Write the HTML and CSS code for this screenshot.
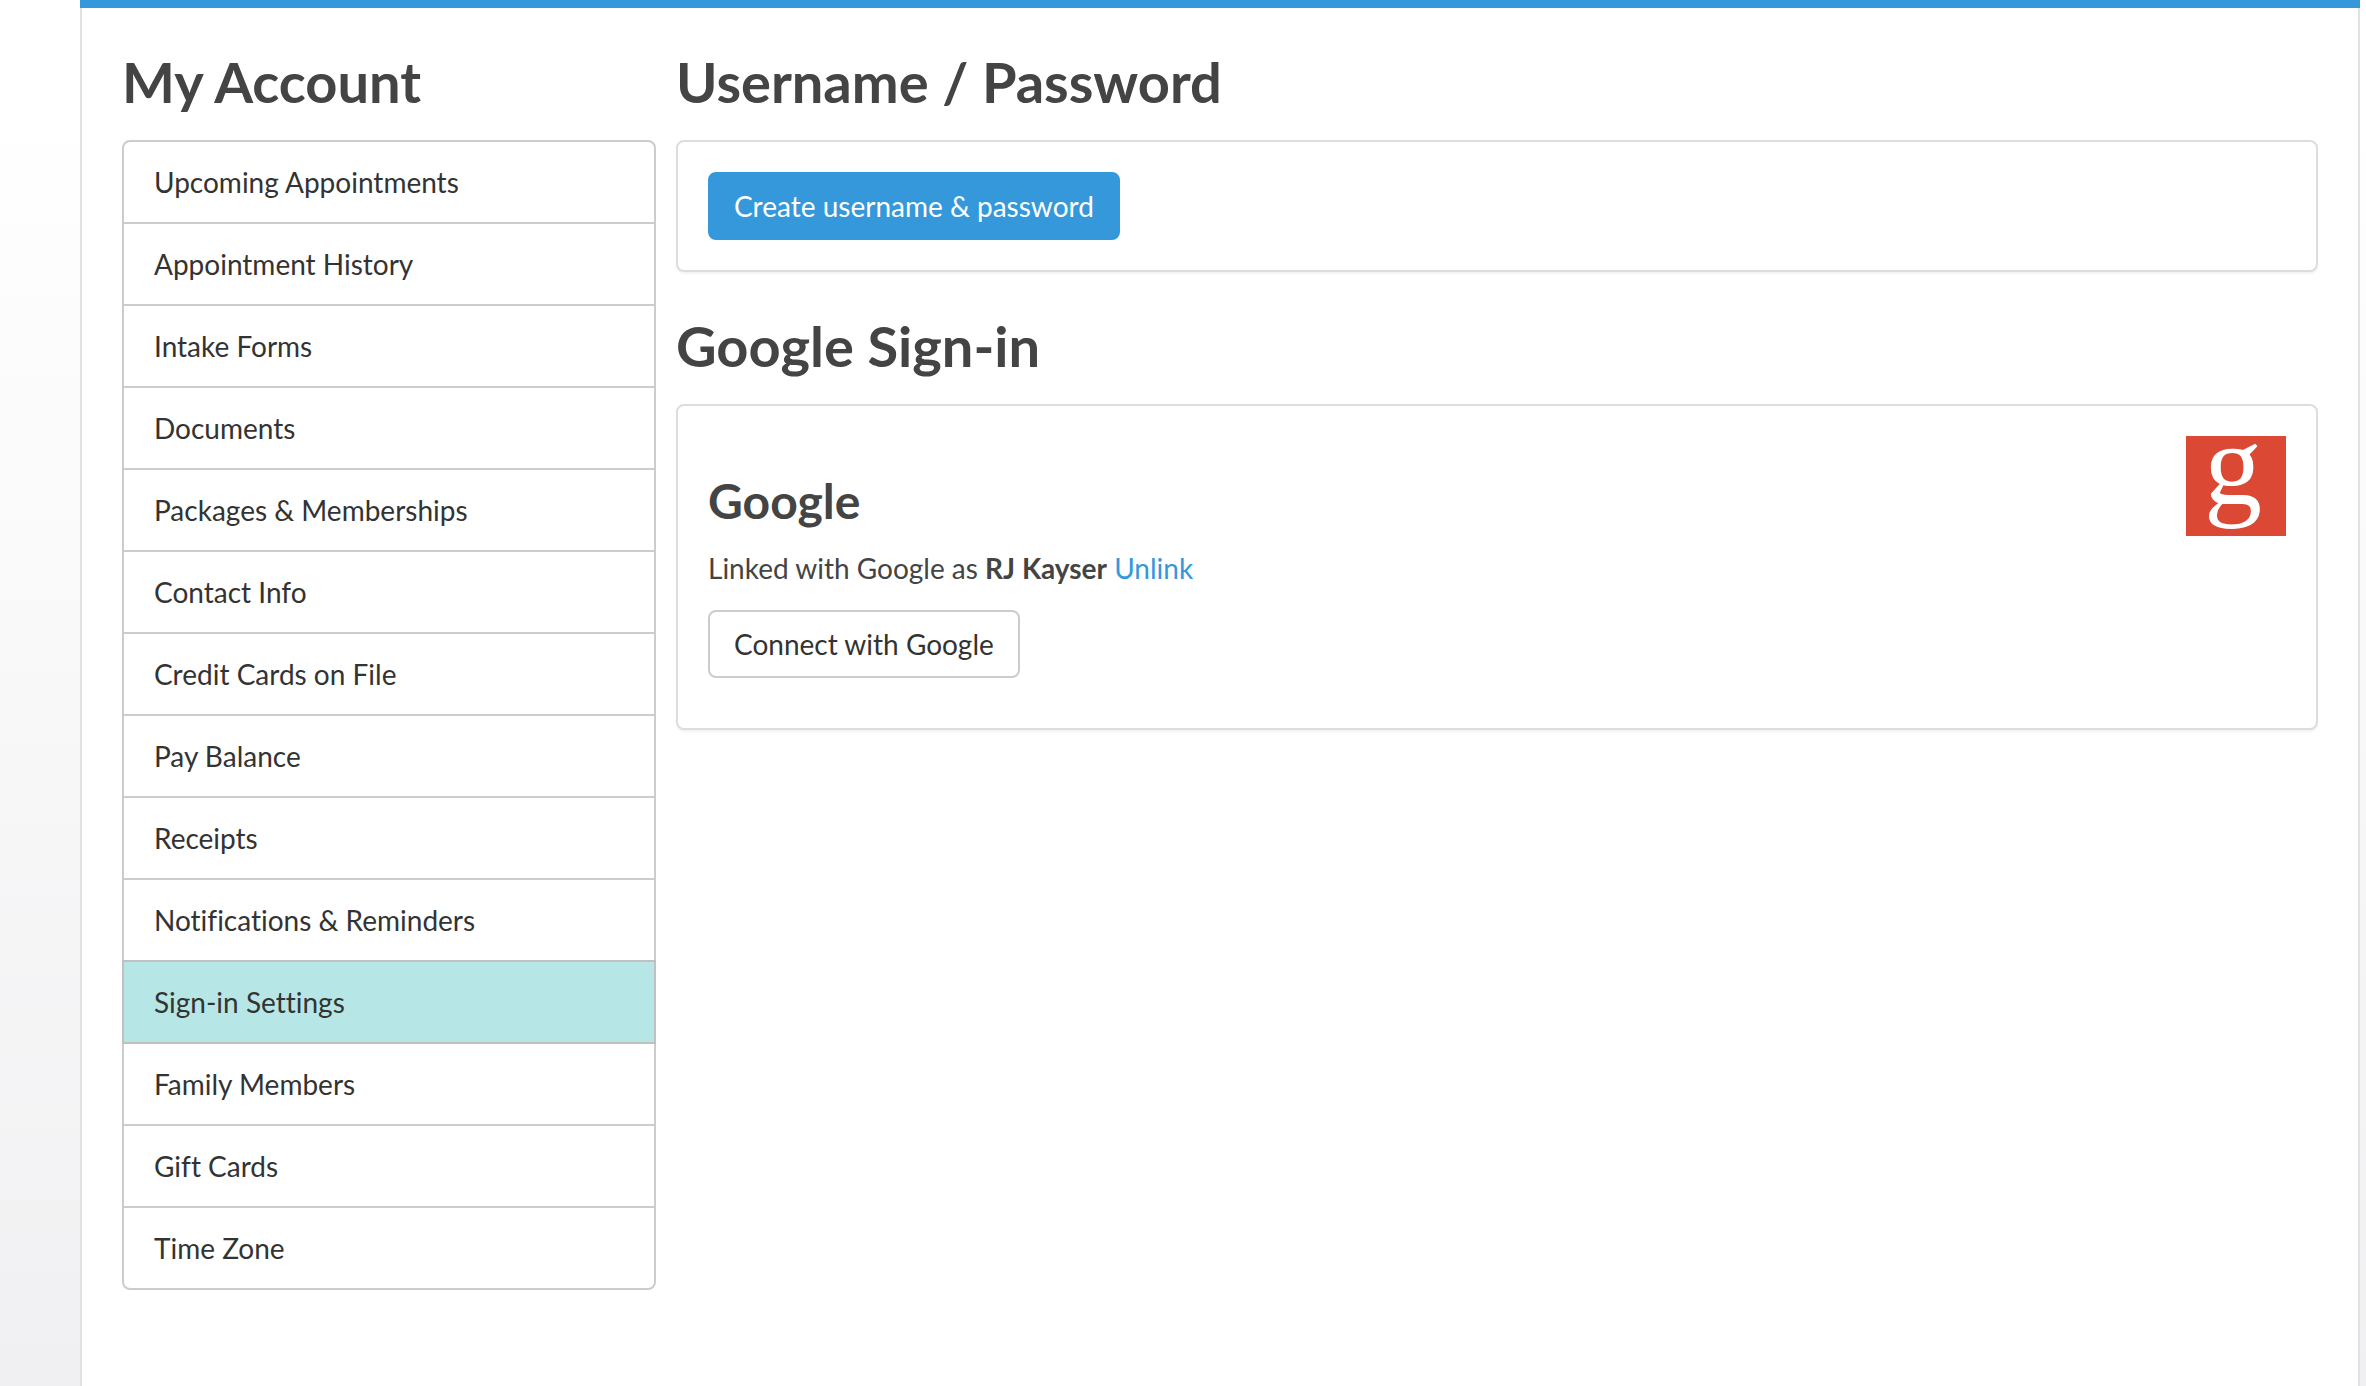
FILE: index.html
```html
<!DOCTYPE html>
<html lang="en">
<head>
  <meta charset="UTF-8" />
  <meta name="viewport" content="width=device-width, initial-scale=1.0" />
  <title>My Account - Sign-in Settings</title>
  <link rel="stylesheet" href="styles.css">
</head>
<body>
  <div class="page">
    <div class="columns">
      <aside class="sidebar">
        <h2>My Account</h2>
        <nav>
          <ul class="account-menu">
            <li><a href="#upcoming">Upcoming Appointments</a></li>
            <li><a href="#history">Appointment History</a></li>
            <li><a href="#intake">Intake Forms</a></li>
            <li><a href="#documents">Documents</a></li>
            <li><a href="#packages">Packages &amp; Memberships</a></li>
            <li><a href="#contact">Contact Info</a></li>
            <li><a href="#cards">Credit Cards on File</a></li>
            <li><a href="#balance">Pay Balance</a></li>
            <li><a href="#receipts">Receipts</a></li>
            <li><a href="#notifications">Notifications &amp; Reminders</a></li>
            <li><a href="#sign-in" class="active">Sign-in Settings</a></li>
            <li><a href="#family">Family Members</a></li>
            <li><a href="#gift-cards">Gift Cards</a></li>
            <li><a href="#time-zone">Time Zone</a></li>
          </ul>
        </nav>
      </aside>

      <main class="content">
        <h2>Username / Password</h2>
        <section class="panel">
          <button type="button" class="btn btn-primary">Create username &amp; password</button>
        </section>

        <h2>Google Sign-in</h2>
        <section class="panel provider">
          <div class="provider-info">
            <h3>Google</h3>
            <p>Linked with Google as <strong>RJ Kayser</strong> <a href="#unlink">Unlink</a></p>
            <button type="button" class="btn">Connect with Google</button>
          </div>
          <svg class="provider-logo" viewBox="0 0 100 100" role="img" aria-label="Google">
            <rect width="100" height="100" fill="#db4834" />
            <text x="18" y="68" fill="#fff">g</text>
          </svg>
        </section>
      </main>
    </div>
  </div>
</body>
</html>
```
FILE: styles.css
```css
* {
  margin: 0;
  padding: 0;
  box-sizing: border-box;
}

body {
  background: linear-gradient(#fff, #fff 100px, #f0f0f2) no-repeat;
  color: #444;
  font-family: Lato, "Open Sans", sans-serif;
  font-size: 28px;
  font-variant-ligatures: none;
  line-height: 40px;
}

.page {
  display: flex;
  min-height: 100vh;
  margin: 0 6px 0 80px;
  background: #fff;
  border-top: 8px solid #3498db;
}

.columns {
  flex: 1;
  display: grid;
  grid-template-columns: repeat(4, 1fr);
  gap: 20px;
  padding: 0 40px 40px;
  border: solid #e1e1e1;
  border-width: 0 2px;
}

.content {
  grid-column: span 3;
}

h2 {
  padding: 44px 0 28px;
  font-size: 56px;
  line-height: 60px;
}

h3 {
  margin: 38px 0 20px;
  font-size: 48px;
  line-height: 54px;
}

a {
  color: #3498db;
  text-decoration: none;
}

/* Menu */
.account-menu {
  list-style: none;
}

.account-menu a {
  display: block;
  padding: 20px 30px;
  border: 2px solid #ccc;
  color: #333;
}

.account-menu li + li {
  margin-top: -2px;
}

.account-menu li:first-child a {
  border-radius: 8px 8px 0 0;
}

.account-menu li:last-child a {
  border-radius: 0 0 8px 8px;
}

.account-menu a.active {
  position: relative;
  background: #b6e7e6;
  border-color: #c0c0c0;
}

/* Panels */
.panel {
  padding: 30px;
  background: #fff;
  border: 2px solid #ddd;
  border-radius: 8px;
  box-shadow: 0 2px 2px rgba(0, 0, 0, 0.05);
}

.provider {
  display: flex;
  justify-content: space-between;
  align-items: flex-start;
}

.provider-info p {
  margin-bottom: 22px;
}

.provider-info .btn {
  margin-bottom: 20px;
}

.provider-logo {
  flex: none;
  width: 100px;
  height: 100px;
  overflow: visible;
}

.provider-logo text {
  font: 116px "Liberation Serif", serif;
}

.btn {
  display: block;
  padding: 12px 24px;
  background: #fff;
  border: 2px solid #ccc;
  border-radius: 8px;
  color: #333;
  font: inherit;
  cursor: pointer;
}

.btn-primary {
  background: #3498db;
  border-color: #3498db;
  color: #fff;
}
```
